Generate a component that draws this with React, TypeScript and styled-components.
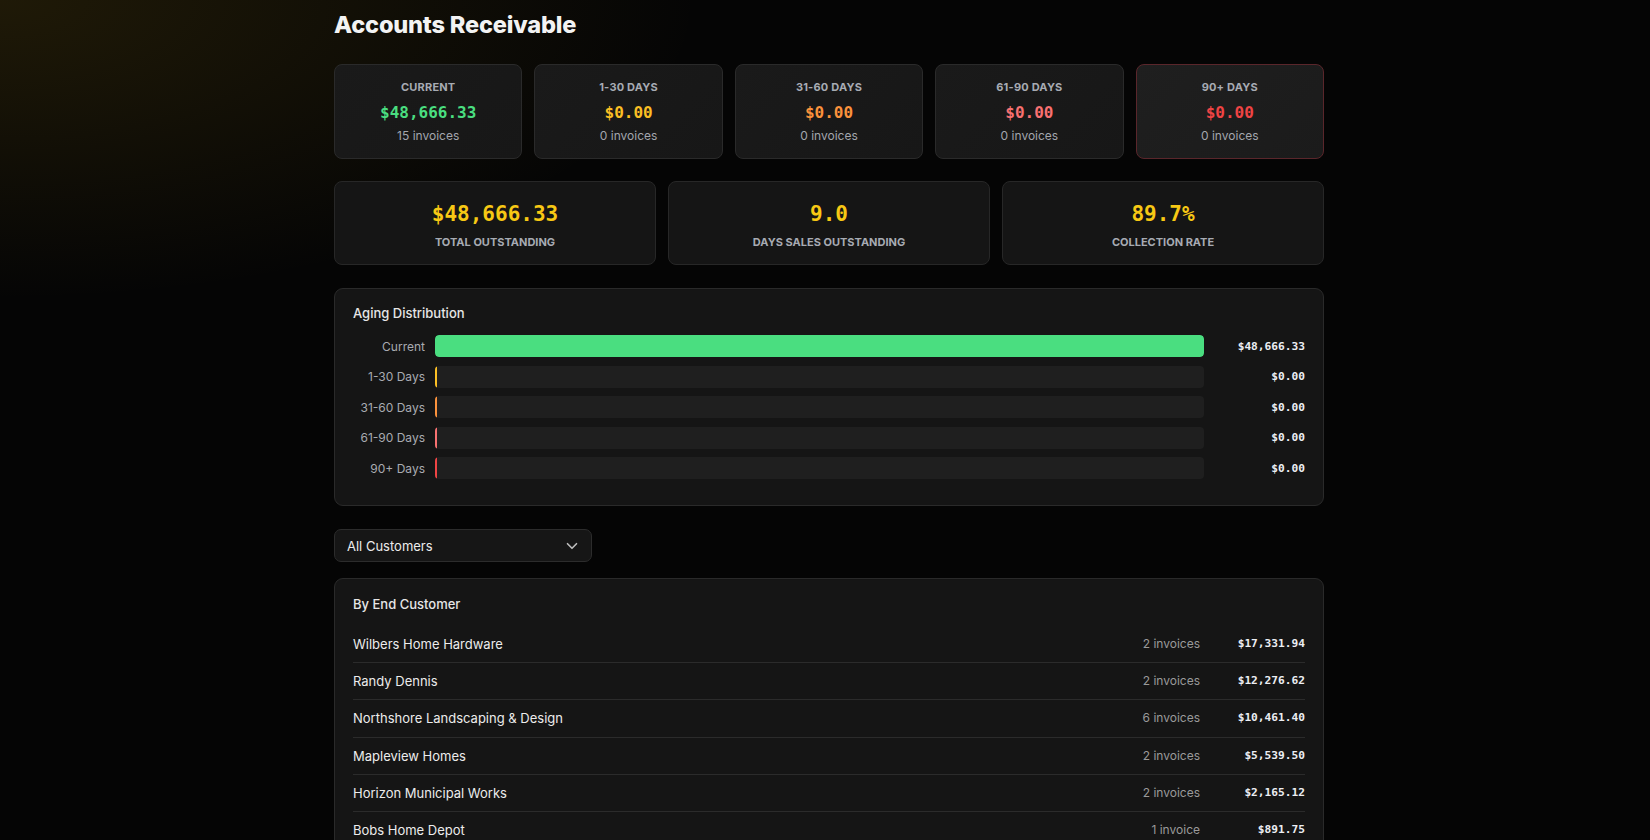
import React from "react";
import styled, { createGlobalStyle } from "styled-components";
import { ChevronDown } from "lucide-react";

const GlobalStyle = createGlobalStyle`
  html, body { margin: 0; padding: 0; }
  body {
    background-color: #050505;
    background-image: radial-gradient(ellipse 700px 300px at 0 0, rgba(190, 150, 20, 0.14), rgba(190, 150, 20, 0) 100%);
    background-repeat: no-repeat;
    min-height: 100vh;
    font-family: Inter, "Noto Sans", "DejaVu Sans", sans-serif;
    color: #e5e5e5;
  }
  * { box-sizing: border-box; }
`;

const MONO = `"DejaVu Sans Mono", "Liberation Mono", monospace`;

const Page = styled.div`
  display: flex;
  justify-content: center;
  padding: 10px 0 40px 8px;
`;

const Main = styled.main`
  width: 990px;
  display: flex;
  flex-direction: column;
`;

const Title = styled.h1`
  margin: 0 0 25px;
  font-size: 23.6px;
  line-height: 29px;
  font-weight: 800;
  color: #f3f3f3;
  letter-spacing: -0.2px;
`;

const BucketGrid = styled.div`
  display: grid;
  grid-template-columns: repeat(5, 1fr);
  gap: 12px;
  margin-bottom: 22px;
`;

const BucketCard = styled.div<{ $alert?: boolean }>`
  height: 95px;
  border-radius: 8px;
  border: 1px solid ${(p) => (p.$alert ? "#5a262b" : "#2a2a2a")};
  background: ${(p) =>
    p.$alert
      ? "linear-gradient(135deg, #1f1f1f, #1b1b1b)"
      : "linear-gradient(135deg, #1a1a1a, #171717)"};
  display: flex;
  flex-direction: column;
  align-items: center;
  padding-top: 15px;
`;

const BucketLabel = styled.div`
  font-size: 11px;
  line-height: 14px;
  font-weight: 700;
  letter-spacing: 0.2px;
  color: #a7abb3;
  text-transform: uppercase;
`;

const BucketValue = styled.div<{ $color: string }>`
  margin-top: 9px;
  font-family: ${MONO};
  font-size: 16px;
  line-height: 20px;
  font-weight: 700;
  color: ${(p) => p.$color};
`;

const BucketCount = styled.div`
  margin-top: 5px;
  font-size: 12px;
  line-height: 15px;
  color: #a3a6ad;
`;

const SummaryGrid = styled.div`
  display: grid;
  grid-template-columns: repeat(3, 1fr);
  gap: 12px;
  margin-bottom: 23px;
`;

const SummaryCard = styled.div`
  height: 84px;
  border-radius: 8px;
  border: 1px solid #272727;
  background: #151515;
  display: flex;
  flex-direction: column;
  align-items: center;
  padding-top: 19px;
`;

const SummaryValue = styled.div`
  font-family: ${MONO};
  font-size: 21px;
  line-height: 26px;
  font-weight: 700;
  color: #f7c814;
`;

const SummaryLabel = styled.div`
  margin-top: 8px;
  font-size: 11px;
  line-height: 14px;
  font-weight: 700;
  color: #a7abb3;
  text-transform: uppercase;
`;

const Panel = styled.section<{ $pt: number; $pb: number }>`
  border-radius: 9px;
  border: 1px solid #2a2a2a;
  background: #151515;
  padding: ${(p) => p.$pt}px 18px ${(p) => p.$pb}px;
`;

const PanelTitle = styled.h2<{ $gap: number }>`
  margin: 0 0 ${(p) => p.$gap}px;
  font-size: 13px;
  line-height: 16px;
  font-weight: 500;
  color: #e6e6e6;
`;

const BarList = styled.div`
  display: flex;
  flex-direction: column;
  gap: 8.5px;
`;

const BarRow = styled.div`
  display: flex;
  align-items: center;
  height: 22px;
`;

const BarLabel = styled.div`
  width: 72px;
  text-align: right;
  font-size: 12px;
  color: #a9abb1;
  margin-right: 10px;
  flex-shrink: 0;
`;

const BarTrack = styled.div`
  flex: 1;
  height: 100%;
  background: #1f1f1f;
  border-radius: 4px;
  overflow: hidden;
  display: flex;
`;

const BarFill = styled.div<{ $color: string }>`
  height: 100%;
  min-width: 2px;
  border-radius: 4px;
  background: ${(p) => p.$color};
`;

const BarValue = styled.div`
  width: 101px;
  text-align: right;
  font-family: ${MONO};
  font-size: 11.2px;
  font-weight: 700;
  color: #eceef3;
  flex-shrink: 0;
`;

const SelectBox = styled.div`
  width: 258px;
  height: 33px;
  border-radius: 7px;
  border: 1px solid #2c2c2c;
  background: #161616;
  display: flex;
  align-items: center;
  justify-content: space-between;
  padding: 0 10px 0 12px;
  margin-top: 23px;
  margin-bottom: 16px;
  font-size: 13px;
  color: #ececec;
  svg { color: #bdbdbd; }
`;

const CustomerRow = styled.div`
  display: flex;
  align-items: center;
  padding: 10.1px 0;
  line-height: 16px;
  border-bottom: 1px solid #2b2b2b;
  &:last-child { border-bottom: none; }
`;

const CustomerName = styled.div`
  flex: 1;
  font-size: 13px;
  color: #ececec;
`;

const CustomerCount = styled.div`
  font-size: 12px;
  color: #9a9a9a;
`;

const CustomerAmount = styled.div`
  width: 105px;
  text-align: right;
  font-family: ${MONO};
  font-size: 11.2px;
  font-weight: 700;
  color: #eceef3;
`;

const buckets = [
  { label: "Current", value: "$48,666.33", count: "15 invoices", color: "#4ade80", amount: 48666.33 },
  { label: "1-30 Days", value: "$0.00", count: "0 invoices", color: "#fbbf24", amount: 0 },
  { label: "31-60 Days", value: "$0.00", count: "0 invoices", color: "#fb923c", amount: 0 },
  { label: "61-90 Days", value: "$0.00", count: "0 invoices", color: "#f87171", amount: 0 },
  { label: "90+ Days", value: "$0.00", count: "0 invoices", color: "#ef4444", amount: 0 },
];

const summary = [
  { value: "$48,666.33", label: "Total Outstanding" },
  { value: "9.0", label: "Days Sales Outstanding" },
  { value: "89.7%", label: "Collection Rate" },
];

const customers = [
  { name: "Wilbers Home Hardware", count: "2 invoices", amount: "$17,331.94" },
  { name: "Randy Dennis", count: "2 invoices", amount: "$12,276.62" },
  { name: "Northshore Landscaping & Design", count: "6 invoices", amount: "$10,461.40" },
  { name: "Mapleview Homes", count: "2 invoices", amount: "$5,539.50" },
  { name: "Horizon Municipal Works", count: "2 invoices", amount: "$2,165.12" },
  { name: "Bobs Home Depot", count: "1 invoice", amount: "$891.75" },
];

export default function App() {
  const total = buckets.reduce((s, b) => s + b.amount, 0);
  return (
    <>
      <GlobalStyle />
      <Page>
        <Main>
          <Title>Accounts Receivable</Title>
          <BucketGrid>
            {buckets.map((b, i) => (
              <BucketCard key={b.label} $alert={i === 4}>
                <BucketLabel>{b.label}</BucketLabel>
                <BucketValue $color={b.color}>{b.value}</BucketValue>
                <BucketCount>{b.count}</BucketCount>
              </BucketCard>
            ))}
          </BucketGrid>
          <SummaryGrid>
            {summary.map((s) => (
              <SummaryCard key={s.label}>
                <SummaryValue>{s.value}</SummaryValue>
                <SummaryLabel>{s.label}</SummaryLabel>
              </SummaryCard>
            ))}
          </SummaryGrid>
          <Panel $pt={16} $pb={26}>
            <PanelTitle $gap={14}>Aging Distribution</PanelTitle>
            <BarList>
              {buckets.map((b) => (
                <BarRow key={b.label}>
                  <BarLabel>{b.label}</BarLabel>
                  <BarTrack>
                    <BarFill
                      $color={b.color}
                      style={{ width: `${total ? (b.amount / total) * 100 : 0}%` }}
                    />
                  </BarTrack>
                  <BarValue>{b.value}</BarValue>
                </BarRow>
              ))}
            </BarList>
          </Panel>
          <SelectBox>
            <span>All Customers</span>
            <ChevronDown size={18} strokeWidth={2.2} />
          </SelectBox>
          <Panel $pt={17} $pb={20}>
            <PanelTitle $gap={14}>By End Customer</PanelTitle>
            {customers.map((c) => (
              <CustomerRow key={c.name}>
                <CustomerName>{c.name}</CustomerName>
                <CustomerCount>{c.count}</CustomerCount>
                <CustomerAmount>{c.amount}</CustomerAmount>
              </CustomerRow>
            ))}
          </Panel>
        </Main>
      </Page>
    </>
  );
}
